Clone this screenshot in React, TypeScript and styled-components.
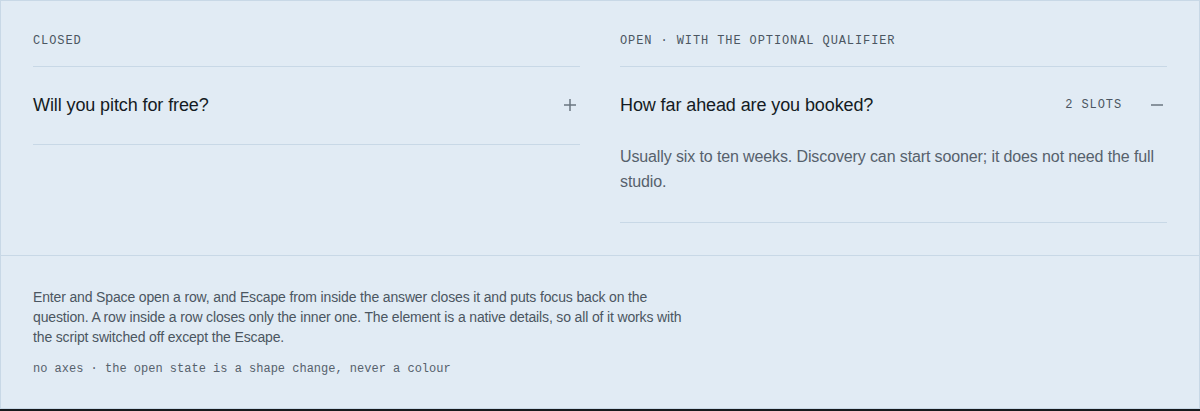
import React from "react";
import styled, { createGlobalStyle } from "styled-components";

const GlobalStyle = createGlobalStyle`
  html, body {
    margin: 0;
    padding: 0;
    background: #16191d;
  }
  * {
    box-sizing: border-box;
  }
`;

const colors = {
  bg: "#e1ebf4",
  line: "#c8d8e6",
  ink: "#141b23",
  body: "#56616c",
  muted: "#4b5661",
  icon: "#6a7680",
};

const rows = [
  {
    label: "CLOSED",
    question: "Will you pitch for free?",
    open: false,
  },
  {
    label: "OPEN · WITH THE OPTIONAL QUALIFIER",
    question: "How far ahead are you booked?",
    meta: "2 SLOTS",
    answer:
      "Usually six to ten weeks. Discovery can start sooner; it does not need the full studio.",
    open: true,
  },
];

export default function App() {
  return (
    <>
      <GlobalStyle />
      <Frame>
        <Columns>
          {rows.map((row) => (
            <Column key={row.label}>
              <Label>{row.label}</Label>
              <Row open={row.open}>
                <Summary onClick={(e) => e.preventDefault()}>
                  <Question>{row.question}</Question>
                  <Trailing>
                    {row.meta && <Meta>{row.meta}</Meta>}
                    <ToggleIcon open={row.open} />
                  </Trailing>
                </Summary>
                {row.answer && <Answer>{row.answer}</Answer>}
              </Row>
            </Column>
          ))}
        </Columns>
        <Notes>
          <NoteText>
            Enter and Space open a row, and Escape from inside the answer
            closes it and puts focus back on the question. A row inside a row
            closes only the inner one. The element is a native details, so all
            of it works with the script switched off except the Escape.
          </NoteText>
          <NoteMono>
            no axes · the open state is a shape change, never a colour
          </NoteMono>
        </Notes>
      </Frame>
    </>
  );
}

const ToggleIcon = ({ open }: { open: boolean }) => (
  <IconBox>
    <svg width="12" height="12" viewBox="0 0 12 12" fill="none">
      <path d="M0 6h12" stroke={colors.icon} strokeWidth="1.5" />
      {!open && <path d="M6 0v12" stroke={colors.icon} strokeWidth="1.5" />}
    </svg>
  </IconBox>
);

const Frame = styled.div`
  width: 1200px;
  height: 409px;
  background: ${colors.bg};
  border: 1px solid ${colors.line};
  display: flex;
  flex-direction: column;
`;

const Columns = styled.div`
  display: grid;
  grid-template-columns: 1fr 1fr;
  gap: 40px;
  padding: 32px;
  border-bottom: 1px solid ${colors.line};
`;

const Column = styled.div`
  display: flex;
  flex-direction: column;
`;

const Label = styled.div`
  font-family: "Liberation Mono", "DejaVu Sans Mono", monospace;
  font-size: 12px;
  line-height: 16px;
  letter-spacing: 0.9px;
  color: ${colors.muted};
  padding-bottom: 17px;
  border-bottom: 1px solid ${colors.line};
`;

const Row = styled.details`
  border-bottom: 1px solid ${colors.line};
`;

const Summary = styled.summary`
  list-style: none;
  display: flex;
  align-items: center;
  justify-content: space-between;
  padding: 27px 0 28px;
  cursor: pointer;

  &::-webkit-details-marker {
    display: none;
  }
`;

const Question = styled.span`
  font-family: "Liberation Sans", Arial, sans-serif;
  font-size: 18px;
  line-height: 22px;
  letter-spacing: -0.1px;
  color: ${colors.ink};
`;

const Trailing = styled.span`
  display: flex;
  align-items: center;
  gap: 25px;
`;

const Meta = styled.span`
  font-family: "Liberation Mono", "DejaVu Sans Mono", monospace;
  font-size: 12px;
  letter-spacing: 0.9px;
  color: ${colors.muted};
`;

const IconBox = styled.span`
  width: 20px;
  height: 20px;
  display: flex;
  align-items: center;
  justify-content: center;
`;

const Answer = styled.p`
  margin: 0;
  padding: 0 0 28px;
  font-family: "Liberation Sans", Arial, sans-serif;
  font-size: 16px;
  line-height: 25px;
  letter-spacing: -0.12px;
  color: ${colors.body};
`;

const Notes = styled.div`
  flex: 1;
  padding: 31px 32px 0;
`;

const NoteText = styled.p`
  margin: 0;
  max-width: 660px;
  font-family: "Liberation Sans", Arial, sans-serif;
  font-size: 14px;
  line-height: 20px;
  letter-spacing: -0.15px;
  color: ${colors.muted};
`;

const NoteMono = styled.p`
  margin: 13px 0 0;
  font-family: "Liberation Mono", "DejaVu Sans Mono", monospace;
  font-size: 12px;
  line-height: 18px;
  color: ${colors.body};
`;
